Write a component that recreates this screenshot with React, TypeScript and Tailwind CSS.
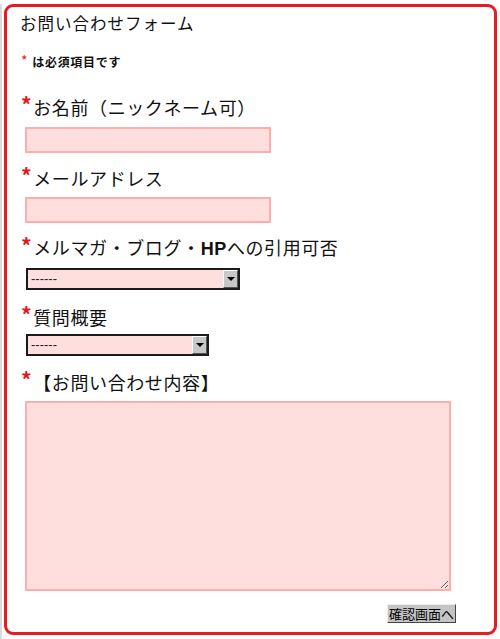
const jp = { fontFamily: '"Noto Sans CJK JP", "Liberation Sans", sans-serif' };

function Label({ children }: { children: React.ReactNode }) {
  return (
    <div className="flex items-center h-[26px] pl-[14px] text-[18px] leading-[26px] tracking-[0.6px] text-[#111]">
      <span className="text-[#e8141c] font-bold text-[21px] mr-[1px] -mt-[7px]">*</span>
      <span>{children}</span>
    </div>
  );
}

function FakeSelect({ width }: { width: string }) {
  return (
    <div className={`ml-[19px] flex h-[22px] border-2 border-[#1b1b1b] bg-[#ffdede] ${width}`}>
      <div className="flex-1 pl-[3px] text-[13px] leading-[18px] text-[#222]" style={{ fontFamily: '"Liberation Sans", sans-serif' }}>
        ------
      </div>
      <div className="w-[15px] h-full bg-[#c8c8c8] border-t border-l border-t-white border-l-white border-r border-b border-r-[#555] border-b-[#555] flex items-center justify-center">
        <div className="w-0 h-0 border-l-[4px] border-r-[4px] border-t-[4px] border-l-transparent border-r-transparent border-t-black" />
      </div>
    </div>
  );
}

export default function App() {
  return (
    <div className="w-[500px] h-[639px] bg-white border-l-2 border-[#dcdcdc]" style={jp}>
      <div className="ml-[2px] mt-[4px] w-[493px] h-[631px] border-[3px] border-[#e51c24] rounded-[9px] flex flex-col">
        <div className="mt-[4px] pl-[13px] h-[24px] text-[16.5px] leading-[24px] tracking-[1px] text-[#111]">
          お問い合わせフォーム
        </div>

        <div className="mt-[19px] pl-[14px] h-[16px] flex items-center text-[12px] leading-[16px] font-bold tracking-[0.7px] text-[#111]">
          <span className="text-[#e8141c] font-normal text-[14px] mr-[4px] -mt-[4px]">*</span>
          <span>は必須項目です</span>
        </div>

        <div className="mt-[24px]">
          <Label>お名前（ニックネーム可）</Label>
        </div>
        <input className="mt-[7px] ml-[18px] w-[246px] h-[26px] bg-[#ffdede] border-2 border-[#ffaeae] outline-none" />

        <div className="mt-[12px]">
          <Label>メールアドレス</Label>
        </div>
        <input className="mt-[6px] ml-[18px] w-[246px] h-[26px] bg-[#ffdede] border-2 border-[#ffaeae] outline-none" />

        <div className="mt-[12px]">
          <Label>
            メルマガ・ブログ・<b style={{ fontFamily: '"Liberation Sans", sans-serif' }}>HP</b>への引用可否
          </Label>
        </div>
        <div className="mt-[7px]">
          <FakeSelect width="w-[214px]" />
        </div>

        <div className="mt-[14px]">
          <Label>質問概要</Label>
        </div>
        <div className="mt-[4px]">
          <FakeSelect width="w-[183px]" />
        </div>

        <div className="mt-[13px]">
          <Label>【お問い合わせ内容】</Label>
        </div>
        <textarea className="mt-[6px] ml-[18px] w-[426px] h-[190px] bg-[#ffdede] border-2 border-[#ffaeae] outline-none" />

        <div className="mt-[13px] flex justify-end pr-[38px]">
          <button className="h-[19px] px-[1px] bg-[#c4c4c4] border border-t-[#eee] border-l-[#eee] border-r-[#444] border-b-[#444] text-[13px] leading-[16px] text-black">
            確認画面へ
          </button>
        </div>
      </div>
    </div>
  );
}
